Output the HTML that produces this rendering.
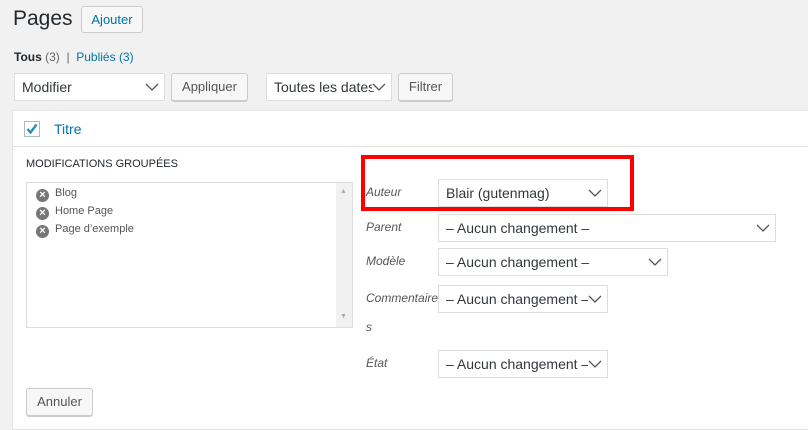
<!DOCTYPE html>
<html><head><meta charset="utf-8"><style>
*{box-sizing:border-box;margin:0;padding:0}
body{width:808px;height:422px;overflow:hidden;background:#f1f1f1;font-family:"Liberation Sans",sans-serif;color:#23282d;position:relative}
.a{position:absolute}
.btn{position:absolute;background:#f7f7f7;border:1px solid #ccc;border-radius:3px;box-shadow:0 1px 0 #ccc;font-size:13px;color:#555;text-align:center}
.sel{position:absolute;background:#fff;border:1px solid #ddd;font-size:14px;color:#32373c;padding-left:7px;white-space:nowrap;overflow:hidden}
.sel svg{position:absolute;right:5px;top:50%;margin-top:-4px}
.lbl{position:absolute;font-size:12px;font-style:italic;color:#555}
.x{display:inline-block;width:13px;height:13px;border-radius:50%;background:#777;color:#fff;font-size:11px;line-height:13px;text-align:center;font-weight:bold;margin-right:6px;vertical-align:-2px}
.li{position:absolute;left:36px;font-size:11px;color:#555}
</style></head><body>
<div class="a" style="left:13px;top:7px;font-size:21px;color:#23282d">Pages</div>
<div class="btn" style="left:81px;top:6px;width:62px;height:27px;line-height:25px;color:#0073aa;background:#f7f7f7;box-shadow:none">Ajouter</div>
<div class="a" style="left:14px;top:50px;font-size:12px;color:#666"><b style="color:#23282d">Tous</b> (3) &nbsp;| &nbsp;<span style="color:#0073aa">Publiés</span> <span style="color:#0073aa">(3)</span></div>
<div class="sel" style="left:14px;top:73px;width:151px;height:28px;line-height:26px">Modifier<svg width="14" height="8"><path d="M1 1l6 6 6-6" stroke="#555" fill="none" stroke-width="1.3"/></svg></div>
<div class="btn" style="left:171px;top:73px;width:77px;height:28px;line-height:26px">Appliquer</div>
<div class="sel" style="left:266px;top:73px;width:126px;height:28px;line-height:26px">Toutes les dates<svg width="14" height="8" style="background:#fff"><path d="M1 1l6 6 6-6" stroke="#555" fill="none" stroke-width="1.3"/></svg></div>
<div class="btn" style="left:398px;top:73px;width:55px;height:28px;line-height:26px">Filtrer</div>
<div class="a" style="left:12px;top:110px;width:800px;height:320px;background:#fff;border:1px solid #e5e5e5"></div>
<div class="a" style="left:12px;top:146px;width:796px;height:1px;background:#e1e1e1"></div>
<div class="a" style="left:24px;top:121px;width:16px;height:16px;border:1px solid #b4b9be;background:#fff"><svg width="14" height="14" style="position:absolute;left:0;top:0"><path d="M2.5 7l3 3.5 6-8" stroke="#1e8cbe" fill="none" stroke-width="2.3"/></svg></div>
<div class="a" style="left:54px;top:121px;font-size:14px;color:#0073aa">Titre</div>
<div class="a" style="left:26px;top:158px;font-size:11px;color:#23282d">MODIFICATIONS GROUPÉES</div>
<div class="a" style="left:26px;top:182px;width:327px;height:146px;border:1px solid #ddd;background:#fff"></div>
<div class="a" style="left:336px;top:183px;width:16px;height:144px;background:#f1f1f1"></div>
<div class="a" style="left:340px;top:188px;font-size:7px;color:#aaa">▲</div>
<div class="a" style="left:340px;top:313px;font-size:7px;color:#aaa">▼</div>
<div class="li" style="top:187px"><span class="x">×</span>Blog</div>
<div class="li" style="top:205px"><span class="x">×</span>Home Page</div>
<div class="li" style="top:223px"><span class="x">×</span>Page d’exemple</div>
<div class="btn" style="left:26px;top:388px;width:67px;height:28px;line-height:26px">Annuler</div>
<div class="a" style="left:361px;top:155px;width:273px;height:56px;border:4px solid #f00"></div>
<div class="lbl" style="left:366px;top:185px">Auteur</div>
<div class="sel" style="left:438px;top:179px;width:170px;height:28px;line-height:26px">Blair (gutenmag)<svg width="14" height="8"><path d="M1 1l6 6 6-6" stroke="#555" fill="none" stroke-width="1.3"/></svg></div>
<div class="lbl" style="left:366px;top:220px">Parent</div>
<div class="sel" style="left:438px;top:214px;width:338px;height:28px;line-height:26px">– Aucun changement –<svg width="14" height="8"><path d="M1 1l6 6 6-6" stroke="#555" fill="none" stroke-width="1.3"/></svg></div>
<div class="lbl" style="left:366px;top:254px">Modèle</div>
<div class="sel" style="left:438px;top:248px;width:230px;height:28px;line-height:26px">– Aucun changement –<svg width="14" height="8"><path d="M1 1l6 6 6-6" stroke="#555" fill="none" stroke-width="1.3"/></svg></div>
<div class="lbl" style="left:366px;top:291px">Commentaire</div>
<div class="lbl" style="left:366px;top:320px">s</div>
<div class="sel" style="left:438px;top:285px;width:170px;height:28px;line-height:26px">– Aucun changement –<svg width="14" height="8" style="background:#fff"><path d="M1 1l6 6 6-6" stroke="#555" fill="none" stroke-width="1.3"/></svg></div>
<div class="lbl" style="left:366px;top:356px">État</div>
<div class="sel" style="left:438px;top:350px;width:170px;height:28px;line-height:26px">– Aucun changement –<svg width="14" height="8" style="background:#fff"><path d="M1 1l6 6 6-6" stroke="#555" fill="none" stroke-width="1.3"/></svg></div>
</body></html>
